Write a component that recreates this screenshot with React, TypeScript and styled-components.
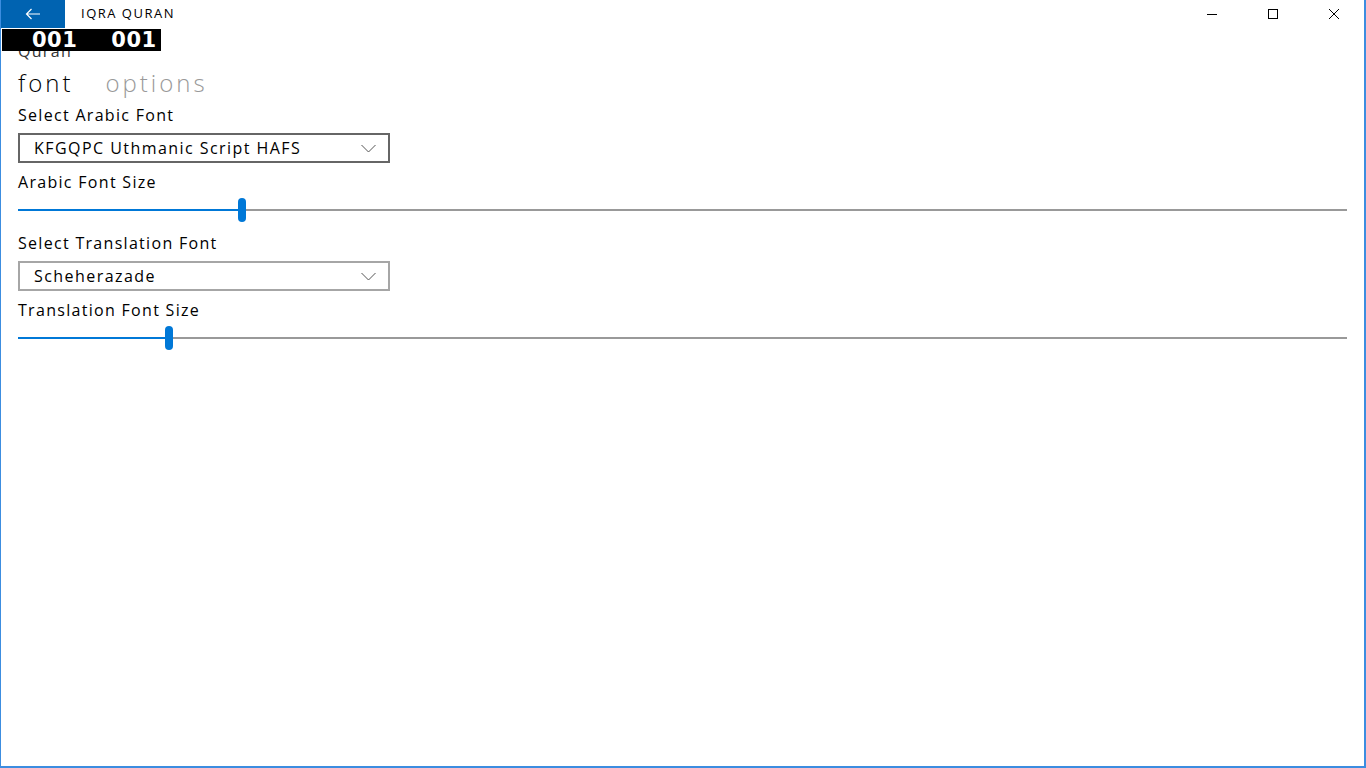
import React from 'react';
import styled, {createGlobalStyle} from 'styled-components';

const GlobalStyle = createGlobalStyle`
  html, body {
    margin: 0;
    padding: 0;
    background: #ffffff;
  }
  body {
    font-family: "Open Sans", "Noto Sans", sans-serif;
    color: #000;
  }
`;

const Window = styled.div`
  position: relative;
  box-sizing: border-box;
  width: 1366px;
  height: 768px;
  border-left: 1px solid #3c8de0;
  border-right: 2px solid #3c8de0;
  border-bottom: 2px solid #3c8de0;
  background: #fff;
  overflow: hidden;
`;

const TitleBar = styled.header`
  display: flex;
  align-items: stretch;
  height: 29px;
`;

const BackButton = styled.div`
  display: flex;
  align-items: center;
  justify-content: center;
  width: 64px;
  height: 28px;
  background: #0063b1;
`;

const AppTitle = styled.div`
  flex: 1;
  display: flex;
  align-items: center;
  padding-left: 16px;
  padding-bottom: 4px;
  font-size: 13px;
  letter-spacing: 1.5px;
  color: #000;
`;

const CaptionButton = styled.div`
  display: flex;
  align-items: center;
  justify-content: center;
  width: 61px;
  height: 28px;
`;

const VerseBadge = styled.div`
  position: absolute;
  top: 29px;
  left: 1px;
  display: flex;
  gap: 34px;
  height: 22px;
  padding: 0 4px 0 30px;
  background: #000;
  color: #fff;
  font-family: "DejaVu Sans", sans-serif;
  font-weight: bold;
  font-size: 21px;
  line-height: 22px;
  letter-spacing: 0.5px;
`;

const Content = styled.main`
  display: flex;
  flex-direction: column;
  padding: 0 17px 0 17px;
`;

const PageTitle = styled.div`
  height: 20px;
  margin-top: 12px;
  font-size: 16px;
  letter-spacing: 1.3px;
  line-height: 20px;
  color: #333;
`;

const PivotHeaders = styled.div`
  display: flex;
  gap: 32px;
  height: 32px;
  margin: 6px 0 6px;
`;

const PivotHeader = styled.div<{ active?: boolean }>`
  font-size: 24px;
  font-weight: 300;
  letter-spacing: 3px;
  line-height: 32px;
  color: ${(p) => (p.active ? '#000' : '#999')};
`;

const FieldLabel = styled.div`
  height: 20px;
  font-size: 16px;
  letter-spacing: 1.3px;
  line-height: 20px;
  color: #000;
`;

const ComboBox = styled.div<{ focused?: boolean }>`
  box-sizing: border-box;
  display: flex;
  align-items: center;
  justify-content: space-between;
  width: 372px;
  height: 30px;
  margin: 8px 0 9px;
  padding: 0 12px 0 14px;
  border: 2px solid ${(p) => (p.focused ? '#666' : '#a6a6a6')};
  font-size: 16px;
  letter-spacing: 1.45px;
  color: #000;
`;

const SliderBox = styled.div`
  position: relative;
  height: 34px;
  margin-bottom: 7px;
`;

const SliderTrack = styled.div`
  position: absolute;
  left: 0;
  right: 0;
  top: 17px;
  height: 2px;
  background: #999;
`;

const SliderFill = styled.div`
  position: absolute;
  left: 0;
  top: 17px;
  height: 2px;
  background: #0078d7;
`;

const SliderThumb = styled.div`
  position: absolute;
  top: 6px;
  width: 8px;
  height: 24px;
  margin-left: -4px;
  border-radius: 4px;
  background: #0078d7;
`;

const Chevron = () => (
  <svg width="15" height="9" viewBox="0 0 15 9">
    <polyline points="0.5,1 7.5,8 14.5,1" fill="none" stroke="#555" strokeWidth="1" />
  </svg>
);

const Slider: React.FC<{ value: number }> = ({value}) => (
  <SliderBox>
    <SliderTrack />
    <SliderFill style={{width: `${value * 100}%`}} />
    <SliderThumb style={{left: `${value * 100}%`}} />
  </SliderBox>
);

export default function App() {
  return (
    <Window>
      <GlobalStyle />
      <TitleBar>
        <BackButton>
          <svg width="16" height="12" viewBox="0 0 16 12">
            <path d="M15 6H1.5M6.5 1L1.5 6l5 5" fill="none" stroke="#fff" strokeWidth="1.2" />
          </svg>
        </BackButton>
        <AppTitle>IQRA QURAN</AppTitle>
        <CaptionButton>
          <svg width="12" height="12" viewBox="0 0 12 12">
            <line x1="1" y1="6.5" x2="11" y2="6.5" stroke="#000" strokeWidth="1" />
          </svg>
        </CaptionButton>
        <CaptionButton>
          <svg width="12" height="12" viewBox="0 0 12 12">
            <rect x="1.5" y="1.5" width="9" height="9" fill="none" stroke="#000" strokeWidth="1" />
          </svg>
        </CaptionButton>
        <CaptionButton>
          <svg width="12" height="12" viewBox="0 0 12 12">
            <path d="M1 1L11 11M11 1L1 11" fill="none" stroke="#000" strokeWidth="1" />
          </svg>
        </CaptionButton>
      </TitleBar>

      <Content>
        <PageTitle>Quran</PageTitle>
        <PivotHeaders>
          <PivotHeader active>font</PivotHeader>
          <PivotHeader>options</PivotHeader>
        </PivotHeaders>

        <FieldLabel>Select Arabic Font</FieldLabel>
        <ComboBox focused>
          <span>KFGQPC Uthmanic Script HAFS</span>
          <Chevron />
        </ComboBox>
        <FieldLabel>Arabic Font Size</FieldLabel>
        <Slider value={0.1685} />

        <FieldLabel>Select Translation Font</FieldLabel>
        <ComboBox>
          <span>Scheherazade</span>
          <Chevron />
        </ComboBox>
        <FieldLabel>Translation Font Size</FieldLabel>
        <Slider value={0.1135} />
      </Content>

      <VerseBadge>
        <span>001</span>
        <span>001</span>
      </VerseBadge>
    </Window>
  );
}
